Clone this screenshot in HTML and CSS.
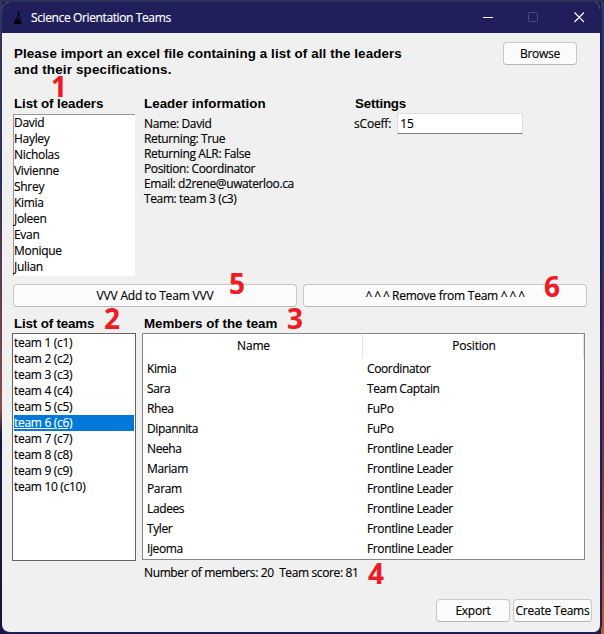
FILE: index.html
```html
<!DOCTYPE html>
<html lang="en">
<head>
<meta charset="utf-8">
<title>Science Orientation Teams</title>
<link rel="stylesheet" href="styles.css">
</head>
<body>
<main class="window">
  <header class="titlebar">
    <svg class="app-icon" width="10" height="16" viewBox="0 0 10 16"><path d="M4 1h3v5l2 5v3H1v-3l3-5z" fill="#14133d"/><path d="M5 3h1v3H5zM3 9h2l1 2h2v3H1v-2z" fill="#000"/></svg>
    <h1 class="title">Science Orientation Teams</h1>
    <div class="controls">
      <svg width="102" height="12" viewBox="0 0 102 12" fill="none"><path d="M0 5.5h10" stroke="#fff"/><rect x="45.5" y="0.5" width="9" height="9" rx="1" stroke="#4d4b7d"/><path d="M91.500 0.500l9.500 9.500M101 0.500L91.500 10" stroke="#fff" stroke-width="1.1"/></svg>
    </div>
  </header>
  <div class="content">
    <section class="intro">
      <p class="heading">Please import an excel file containing a list of all the leaders<br><span class="second-line">and their specifications.</span></p>
      <button class="button browse">Browse</button>
    </section>
    <section class="top">
      <div class="leaders">
        <h2 class="heading">List of leaders</h2>
        <ul class="listbox leader-list"><li>David</li><li>Hayley</li><li>Nicholas</li><li>Vivienne</li><li>Shrey</li><li>Kimia</li><li>Joleen</li><li>Evan</li><li>Monique</li><li>Julian</li></ul>
      </div>
      <div class="info">
        <h2 class="heading">Leader information</h2>
        <p class="details">Name: David<br>Returning: True<br>Returning ALR: False<br>Position: Coordinator<br>Email: d2rene@uwaterloo.ca<br>Team: team 3 (c3)</p>
      </div>
      <div class="settings">
        <h2 class="heading">Settings</h2>
        <label class="field"><span>sCoeff:</span><input class="entry" value="15"></label>
      </div>
    </section>
    <section class="actions">
      <button class="button"><span class="add-label">VVV Add to Team VVV</span></button>
      <button class="button"><span class="remove-label"><span class="carets">^ ^ ^</span> Remove from Team <span class="carets">^ ^ ^</span></span></button>
    </section>
    <section class="bottom">
      <div class="teams">
        <h2 class="heading">List of teams</h2>
        <ul class="listbox team-list"><li>team 1 (c1)</li><li>team 2 (c2)</li><li>team 3 (c3)</li><li>team 4 (c4)</li><li>team 5 (c5)</li><li class="selected">team 6 (c6)</li><li>team 7 (c7)</li><li>team 8 (c8)</li><li>team 9 (c9)</li><li>team 10 (c10)</li></ul>
      </div>
      <div class="members">
        <h2 class="heading">Members of the team</h2>
        <div class="table">
          <div class="row head"><span>Name</span><span>Position</span></div>
          <div class="row"><span>Kimia</span><span>Coordinator</span></div>
          <div class="row"><span>Sara</span><span>Team Captain</span></div>
          <div class="row"><span>Rhea</span><span>FuPo</span></div>
          <div class="row"><span>Dipannita</span><span>FuPo</span></div>
          <div class="row"><span>Neeha</span><span>Frontline Leader</span></div>
          <div class="row"><span>Mariam</span><span>Frontline Leader</span></div>
          <div class="row"><span>Param</span><span>Frontline Leader</span></div>
          <div class="row"><span>Ladees</span><span>Frontline Leader</span></div>
          <div class="row"><span>Tyler</span><span>Frontline Leader</span></div>
          <div class="row"><span>Ijeoma</span><span>Frontline Leader</span></div>
        </div>
        <p class="status">Number of members: 20&nbsp; Team score: 81</p>
      </div>
    </section>
    <footer class="footer">
      <button class="button export">Export</button>
      <button class="button create">Create Teams</button>
    </footer>
  </div>
</main>
<span class="mark m1">1</span>
<span class="mark m2">2</span>
<span class="mark m3">3</span>
<span class="mark m4">4</span>
<span class="mark m5">5</span>
<span class="mark m6">6</span>
</body>
</html>
```
FILE: styles.css
```css
* { box-sizing: border-box; margin: 0; padding: 0; }
body {
  width: 604px;
  height: 634px;
  overflow: hidden;
  padding: 2px 3px 1px 2px;
  background:
    linear-gradient(#2c315a, #2c315a) 0 0 / 100% 2px no-repeat,
    linear-gradient(#33345f 0 70px, #30305e 240px, #6b3046 430px, #a75632 600px, #b85c33) 100% 0 / 3px 100% no-repeat,
    linear-gradient(#30355d 0 100px, #29305d 180px, #6b3c50 300px, #8a4b4c 410px, #19183c 435px, #181740) 0 0 / 2px 100% no-repeat,
    #1c1a46;
  color: #000;
  font: 12px/16px "Open Sans", "Noto Sans", sans-serif;
  letter-spacing: -0.38px;
  -webkit-text-stroke: 0.15px currentColor;
}
.window {
  width: 600px;
  height: 631px;
  border: solid #201f5c;
  border-width: 0 2px 1px 0;
  border-radius: 8px;
  background: #f0f0f0;
  overflow: hidden;
}
.titlebar {
  display: flex;
  align-items: center;
  height: 31px;
  padding: 0 15px 0 11px;
  background: #201f5c;
  color: #fff;
}
.title { margin-left: 8px; font-size: 12px; font-weight: 400; letter-spacing: -0.38px; }
.controls { display: flex; margin-left: auto; }
.content { padding-left: 11px; }
.heading {
  padding-left: 1px;
  font: bold 13.33px/16px "Liberation Sans", sans-serif;
  letter-spacing: 0;
  white-space: nowrap;
  -webkit-text-stroke: 0;
}
.intro { display: flex; height: 62px; padding-top: 9px; }
.intro .heading { width: 490px; padding-top: 4px; letter-spacing: 0.11px; }
.second-line { letter-spacing: 0.2px; }
.button {
  display: flex;
  align-items: center;
  justify-content: center;
  height: 23px;
  border: 1px solid #c8c8c8;
  border-bottom-color: #b8b8b8;
  border-radius: 4px;
  background: #fbfbfb;
  color: #000;
  font: inherit;
  letter-spacing: -0.25px;
  white-space: nowrap;
}
.browse { width: 74px; }
.top { display: grid; grid-template-columns: 130px 210px 1fr; height: 189px; }
.top .heading, .bottom .heading { height: 16px; line-height: 18px; }
.leaders .heading { letter-spacing: -0.07px; }
.info .heading { letter-spacing: 0.05px; }
.settings .heading { padding-left: 2px; letter-spacing: -0.2px; }
.teams .heading { letter-spacing: -0.15px; }
.listbox { list-style: none; background: #fff; white-space: nowrap; letter-spacing: -0.3px; }
.listbox li { height: 16px; }
.leader-list {
  width: 122px;
  height: 162px;
  margin-top: 3px;
  border-left: 1px solid #999;
  border-top: 1px solid #999;
}
.details { padding: 5px 0 0 1px; line-height: 15px; white-space: nowrap; }
.field { display: flex; align-items: center; gap: 6px; margin-top: 2px; padding-left: 1px; letter-spacing: -0.18px; }
.entry {
  width: 126px;
  height: 21px;
  padding-left: 2px;
  border: 1px solid #ddd;
  border-bottom-color: #808080;
  background: #fff;
  font: inherit;
  letter-spacing: inherit;
}
.actions { display: grid; grid-template-columns: 284px 284px; gap: 6px; }
.add-label { letter-spacing: -0.18px; }
.carets { letter-spacing: -0.6px; }
.bottom { display: grid; grid-template-columns: 129px 443px; margin-top: 8px; height: 284px; }
.team-list {
  width: 124px;
  height: 228px;
  margin: 2px 0 0 -1px;
  border: 1px solid #646464;
  padding-top: 1px;
}
.team-list li { margin: 0 1px; }
.selected { background: #0078d7; color: #fff; text-decoration: underline; }
.members .heading { padding-left: 2px; }
.table { width: 443px; height: 227px; margin-top: 2px; border: 1px solid #828790; background: #fff; }
.row { display: grid; grid-template-columns: 220px 221px; height: 20px; line-height: 21px; }
.row span { padding-left: 4px; }
.head { height: 24px; line-height: 24px; text-align: center; letter-spacing: -0.2px; }
.head .row span, .row.head span { padding: 0 0 0 2px; border-right: 1px solid #e5e5e5; }
.status { margin-top: 5px; padding-left: 2px; }
.footer { display: flex; gap: 3px; padding-left: 423px; }
.export { width: 74px; }
.create { width: 79px; }
.mark {
  position: absolute;
  color: #ed1c24;
  font: bold 28px/20px "Open Sans", sans-serif;
  letter-spacing: 0;
}
.m1 { left: 51px; top: 76px; }
.m2 { left: 104px; top: 308px; }
.m3 { left: 287px; top: 308px; }
.m4 { left: 368px; top: 563px; }
.m5 { left: 229px; top: 273px; }
.m6 { left: 544px; top: 276px; }
```
